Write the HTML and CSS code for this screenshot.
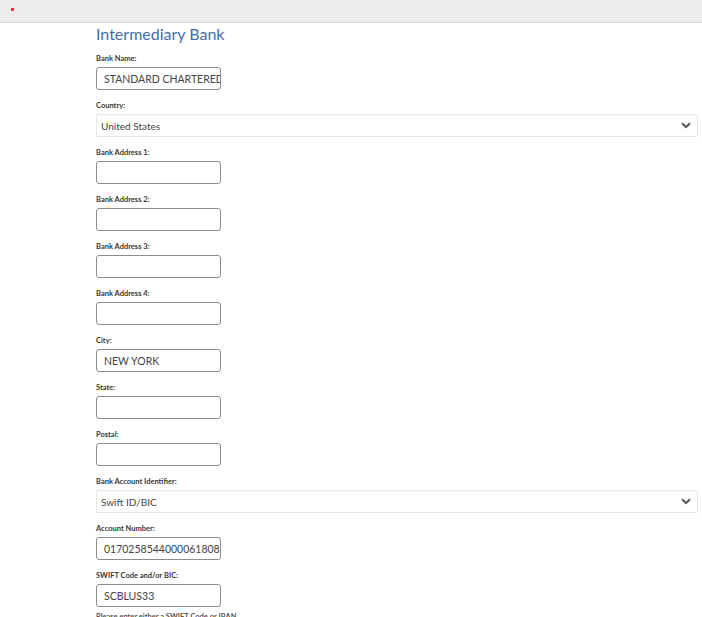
FILE: index.html
```html
<!DOCTYPE html>
<html>
<head>
<meta charset="utf-8">
<link rel="stylesheet" href="styles.css">
</head>
<body>
<div class="topbar"><span class="dot"></span></div>
<div class="content">
  <h2 class="title">Intermediary Bank</h2>
  <div class="field">
    <label class="lbl">Bank Name:</label>
    <input class="box" type="text" value="STANDARD CHARTERED BANK">
  </div>
  <div class="field">
    <label class="lbl">Country:</label>
    <div class="select"><span>United States</span>
      <svg class="chev" width="10" height="7" viewBox="0 0 10 7"><path d="M1 1.2 L5 5 L9 1.2" fill="none" stroke="#555" stroke-width="2"/></svg>
    </div>
  </div>
  <div class="field">
    <label class="lbl">Bank Address 1:</label>
    <input class="box" type="text" value="">
  </div>
  <div class="field">
    <label class="lbl">Bank Address 2:</label>
    <input class="box" type="text" value="">
  </div>
  <div class="field">
    <label class="lbl">Bank Address 3:</label>
    <input class="box" type="text" value="">
  </div>
  <div class="field">
    <label class="lbl">Bank Address 4:</label>
    <input class="box" type="text" value="">
  </div>
  <div class="field">
    <label class="lbl">City:</label>
    <input class="box" type="text" value="NEW YORK">
  </div>
  <div class="field">
    <label class="lbl">State:</label>
    <input class="box" type="text" value="">
  </div>
  <div class="field">
    <label class="lbl">Postal:</label>
    <input class="box" type="text" value="">
  </div>
  <div class="field">
    <label class="lbl">Bank Account Identifier:</label>
    <div class="select"><span>Swift ID/BIC</span>
      <svg class="chev" width="10" height="7" viewBox="0 0 10 7"><path d="M1 1.2 L5 5 L9 1.2" fill="none" stroke="#555" stroke-width="2"/></svg>
    </div>
  </div>
  <div class="field">
    <label class="lbl">Account Number:</label>
    <input class="box" type="text" value="017025854400006180859">
  </div>
  <div class="field">
    <label class="lbl">SWIFT Code and/or BIC:</label>
    <input class="box" type="text" value="SCBLUS33">
    <p class="note">Please enter either a SWIFT Code or IBAN</p>
  </div>
</div>
</body>
</html>
```
FILE: styles.css
```css
html, body {
  margin: 0;
  padding: 0;
  background: #fff;
  font-family: Lato, "Open Sans", sans-serif;
  overflow: hidden;
}
.topbar {
  height: 22px;
  background: #ececec;
  border-bottom: 1px solid #d9d9d9;
  display: flex;
  align-items: flex-start;
}
.dot {
  display: block;
  width: 3px;
  height: 3px;
  background: #f03030;
  margin: 8px 0 0 11px;
}
.content {
  padding: 0 4px 0 96px;
}
.title {
  margin: 0 0 6px 0;
  font-size: 16px;
  line-height: 22px;
  font-weight: 400;
  color: #3f6ea8;
}
.field {
  margin-bottom: 8px;
}
.lbl {
  display: block;
  font-size: 7.5px;
  line-height: 12px;
  font-weight: 700;
  color: #3a3630;
  padding-top: 2px;
  margin-bottom: 2px;
}
.box {
  display: block;
  box-sizing: border-box;
  width: 125px;
  height: 23px;
  border: 1px solid #8c8c8c;
  border-radius: 3px;
  padding: 0 0 0 7px;
  margin: 0;
  font-family: Lato, sans-serif;
  font-size: 10.5px;
  color: #444;
  background: #fff;
  outline: none;
}
.select {
  box-sizing: border-box;
  height: 23px;
  border: 1px solid #e6e6e6;
  border-radius: 2px;
  display: flex;
  align-items: center;
  justify-content: space-between;
  padding: 0 6px 0 4px;
  font-size: 10px;
  color: #444;
  box-shadow: inset 0 1px 1px rgba(0,0,0,0.03);
}
.chev {
  display: block;
}
.note {
  margin: 5px 0 0 0;
  font-size: 7.5px;
  line-height: 10px;
  font-weight: 700;
  color: #555;
}
```
